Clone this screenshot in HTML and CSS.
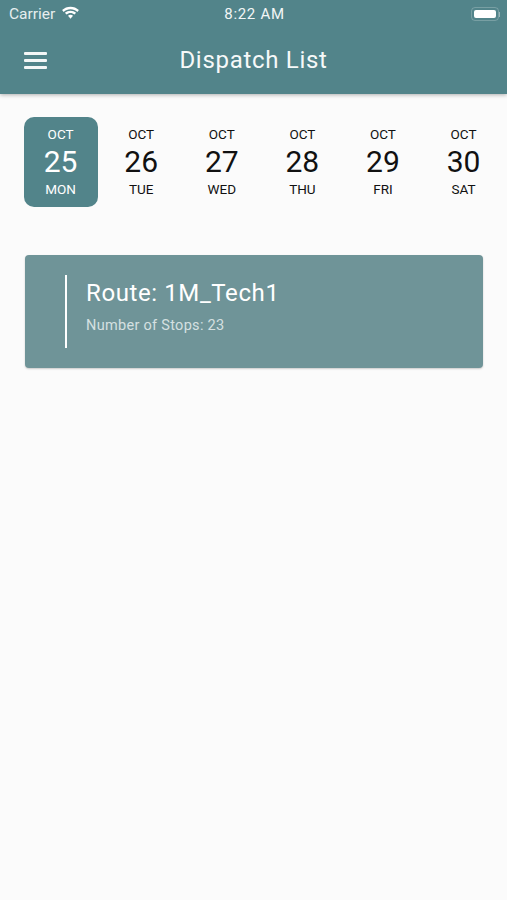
FILE: index.html
```html
<!DOCTYPE html>
<html lang="en">
  <head>
    <meta charset="UTF-8" />
    <meta name="viewport" content="width=device-width, initial-scale=1.0" />
    <title>Dispatch List</title>
    <link rel="stylesheet" href="styles.css">
  </head>
  <body>
    <header class="app-header">
      <!-- status bar -->
      <div class="status-bar">
        <div class="status-left">
          <span>Carrier</span>
          <svg class="wifi" width="19" height="14" viewBox="0 0 19 14">
            <path d="M9.5 3.2c2.6 0 5 1 6.8 2.7l1.6-1.8C15.6 1.900 12.700.7 9.500.7S3.400 1.900 1.100 4.100l1.600 1.800C4.500 4.200 6.900 3.200 9.500 3.200z" fill="#fff"/>
            <path d="M9.500 7.100c1.500 0 2.900.6 4 1.500l1.600-1.800C13.600 5.500 11.600 4.700 9.500 4.700s-4.100.8-5.600 2.100l1.600 1.800c1.100-.9 2.500-1.500 4-1.500z" fill="#fff"/>
            <path d="M9.500 8.700c-1 0-1.800.4-2.500 1l2.500 3 2.500-3c-.7-.6-1.500-1-2.500-1z" fill="#fff"/>
          </svg>
        </div>
        <span class="status-time">8:22 AM</span>
        <div class="battery">
          <div class="battery-body"><div class="battery-level"></div></div>
          <div class="battery-cap"></div>
        </div>
      </div>

      <!-- title bar -->
      <div class="title-bar">
        <button class="menu-btn" aria-label="Menu">
          <span></span>
          <span></span>
          <span></span>
        </button>
        <h1 class="title">Dispatch List</h1>
      </div>
    </header>

    <main>
      <!-- date strip -->
      <div class="date-strip">
        <div class="date active">
          <span class="month">OCT</span>
          <span class="day">25</span>
          <span class="weekday">MON</span>
        </div>
        <div class="date">
          <span class="month">OCT</span>
          <span class="day">26</span>
          <span class="weekday">TUE</span>
        </div>
        <div class="date">
          <span class="month">OCT</span>
          <span class="day">27</span>
          <span class="weekday">WED</span>
        </div>
        <div class="date">
          <span class="month">OCT</span>
          <span class="day">28</span>
          <span class="weekday">THU</span>
        </div>
        <div class="date">
          <span class="month">OCT</span>
          <span class="day">29</span>
          <span class="weekday">FRI</span>
        </div>
        <div class="date">
          <span class="month">OCT</span>
          <span class="day">30</span>
          <span class="weekday">SAT</span>
        </div>
      </div>

      <!-- route card -->
      <div class="route-card">
        <div class="route-info">
          <div class="route-name">Route: 1M_Tech1</div>
          <div class="route-stops">Number of Stops: 23</div>
        </div>
      </div>
    </main>
  </body>
</html>
```

FILE: styles.css
```css
* {
  margin: 0;
  padding: 0;
  box-sizing: border-box;
}

body {
  width: 507px;
  height: 900px;
  overflow: hidden;
  background-color: #fbfbfb;
  font-family: Roboto, "Noto Sans", sans-serif;
  color: #111;
}

/* header */
.app-header {
  height: 94px;
  background-color: #52848a;
  color: #fff;
  box-shadow: 0 1px 4px rgba(0, 0, 0, 0.3);
}

.status-bar {
  display: grid;
  grid-template-columns: 1fr auto 1fr;
  align-items: center;
  height: 28px;
  padding: 0 7px 0 9px;
  font-size: 15.500px;
  color: #e6eeee;
}

.status-left {
  display: flex;
  align-items: center;
  gap: 6px;
}

.wifi {
  margin-bottom: 3px;
}

.status-time {
  font-size: 15px;
  letter-spacing: 0.7px;
  color: #f2f6f6;
}

.battery {
  display: flex;
  align-items: center;
  justify-self: end;
}

.battery-body {
  width: 28px;
  height: 14px;
  padding: 2px;
  border: 1px solid rgba(255, 255, 255, 0.22);
  border-radius: 4px;
}

.battery-level {
  height: 100%;
  background-color: #fff;
  border-radius: 2px;
}

.battery-cap {
  width: 1px;
  height: 5px;
  background-color: rgba(255, 255, 255, 0.4);
}

.title-bar {
  display: flex;
  align-items: center;
  justify-content: center;
  position: relative;
  height: 64px;
}

.menu-btn {
  position: absolute;
  left: 24px;
  top: 24px;
  display: flex;
  flex-direction: column;
  gap: 4.500px;
  width: 23px;
  background: none;
  border: none;
}

.menu-btn span {
  display: block;
  height: 2.500px;
  background-color: #f4f7f7;
  border-radius: 1px;
}

.title {
  font-size: 24px;
  font-weight: 400;
  letter-spacing: 0.7px;
  color: #f6f9f9;
}

/* date strip */
.date-strip {
  display: grid;
  grid-template-columns: repeat(6, 80.6px);
  padding: 23px 0 0 20.3px;
}

.date {
  display: flex;
  flex-direction: column;
  align-items: center;
  width: 74px;
  height: 90px;
  padding-top: 10px;
  justify-self: center;
  border-radius: 10px;
}

.date.active {
  background-color: #52848a;
  color: #fff;
}

.month,
.weekday {
  font-size: 13.500px;
  line-height: 15px;
}

.day {
  font-size: 30px;
  line-height: 38px;
  margin-top: 1px;
  margin-bottom: 1px;
}

/* route card */
.route-card {
  display: flex;
  width: 458px;
  height: 113px;
  margin: 48px 0 0 25px;
  padding: 20px 0 20px 39.500px;
  background-color: #6f9498;
  border-radius: 4px;
  box-shadow: 0 1px 2px rgba(0, 0, 0, 0.2);
  color: #fff;
}

.route-info {
  padding-left: 19.500px;
  border-left: 2.500px solid #fff;
}

.route-name {
  font-size: 24px;
  line-height: 36px;
  letter-spacing: 0.6px;
}

.route-stops {
  margin-top: 6px;
  font-size: 14.500px;
  line-height: 18px;
  letter-spacing: 0.3px;
  color: #d5e0e1;
}
```
